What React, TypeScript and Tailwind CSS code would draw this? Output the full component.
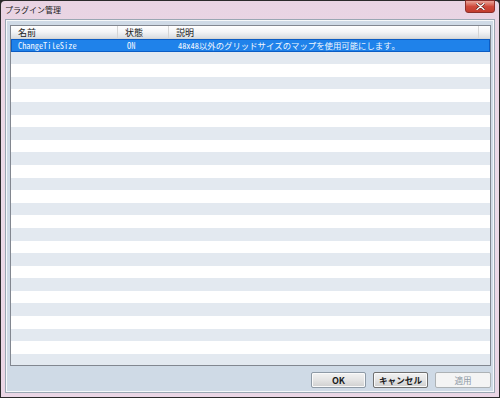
import React from "react";

const JP = "font-['Noto_Sans_CJK_JP','Noto_Sans',sans-serif]";
const MONO = "font-['Noto_Sans_Mono_CJK_JP','Liberation_Mono',monospace]";

const columns = [
  { label: "名前", w: "w-[107px]" },
  { label: "状態", w: "w-[51px]" },
  { label: "説明", w: "w-[310px]" },
];

export default function App() {
  const rows = Array.from({ length: 26 }, (_, i) => i);

  return (
    <div className="w-[500px] h-[398px] overflow-hidden bg-[#2a2a2a] p-px">
      <div className="flex flex-col w-full h-full bg-gradient-to-b from-[#e9d4e3] via-[#ebdbe8] to-[#ead6e5] rounded-t-[4px]">
        {/* title bar */}
        <div className="relative h-[18px] shrink-0 flex items-center pl-[4px]">
          <span className={`${JP} text-[8px] leading-none text-[#1a1a1a]`}>プラグイン管理</span>
          <div className="absolute right-[4px] top-[-1px] w-[30px] h-[13px] rounded-b-[3px] border border-[#8c2f2a] bg-gradient-to-b from-[#e8a49a] via-[#cf4a3c] to-[#c23c2d] flex items-center justify-center">
            <svg width="9" height="7" viewBox="0 0 9 7">
              <path d="M1 0.5 L8 6.5 M8 0.5 L1 6.5" stroke="#5a1a14" strokeWidth="2.6" strokeLinecap="round" />
              <path d="M1 0.5 L8 6.5 M8 0.5 L1 6.5" stroke="#ffffff" strokeWidth="1.4" strokeLinecap="round" />
            </svg>
          </div>
        </div>

        {/* client area */}
        <div className="flex-1 ml-[4px] mr-[4px] mb-[4px] border border-[#9aa7b3] shadow-[inset_0_0_0_1px_#f6f8fa] bg-[#cfdae6] flex flex-col pl-[4px] pr-[3px] pt-[5px]">
          {/* list view */}
          <div className="h-[341px] bg-white border border-[#828790] overflow-hidden flex flex-col">
            <div className="flex h-[13px] shrink-0 bg-gradient-to-b from-[#ffffff] via-[#f3f4f6] to-[#d9dde2] border-b border-[#d5d5d5]">
              {columns.map((c) => (
                <div
                  key={c.label}
                  className={`${c.w} shrink-0 border-r border-[#d5d5d5] pl-[7px] flex items-center ${JP} text-[9px] leading-none text-[#1c1c1c]`}
                >
                  {c.label}
                </div>
              ))}
              <div className="w-[11px] shrink-0" />
            </div>
            {rows.map((i) =>
              i === 0 ? (
                <div
                  key={i}
                  className={`flex h-[12.6px] shrink-0 items-center bg-[#1f82ea] border border-[#0b5cc4] text-[#f2f8ff] ${MONO} text-[8.4px] leading-none`}
                >
                  <div className="w-[107px] shrink-0 pl-[6px]">ChangeTileSize</div>
                  <div className="w-[51px] shrink-0 pl-[8px]">ON</div>
                  <div className="pl-[8px] whitespace-nowrap">48x48以外のグリッドサイズのマップを使用可能にします。</div>
                </div>
              ) : (
                <div key={i} className={`h-[12.6px] shrink-0 ${i % 2 === 1 ? "bg-[#e3e9f0]" : "bg-white"}`} />
              )
            )}
          </div>

          {/* buttons */}
          <div className="flex justify-end gap-[7px] mt-[6px]">
            <button className={`w-[55px] h-[16px] rounded-[2px] border border-[#8e9aa6] bg-gradient-to-b from-[#f2f2f2] via-[#e4e4e4] to-[#cfcfcf] shadow-[inset_0_0_0_1px_#fafafa] ${JP} text-[9px] font-bold leading-none text-[#1a1a1a]`}>
              OK
            </button>
            <button className={`w-[55px] h-[16px] rounded-[2px] border border-[#707070] bg-gradient-to-b from-[#f2f2f2] via-[#e4e4e4] to-[#cfcfcf] shadow-[inset_0_0_0_1px_#fafafa] ${JP} text-[8.6px] font-bold leading-none text-[#1a1a1a]`}>
              キャンセル
            </button>
            <button className={`w-[56px] h-[16px] rounded-[2px] border border-[#adb2b5] bg-[#f4f4f4] ${JP} text-[8.6px] leading-none text-[#8f9ba6]`}>
              適用
            </button>
          </div>
        </div>
      </div>
    </div>
  );
}
